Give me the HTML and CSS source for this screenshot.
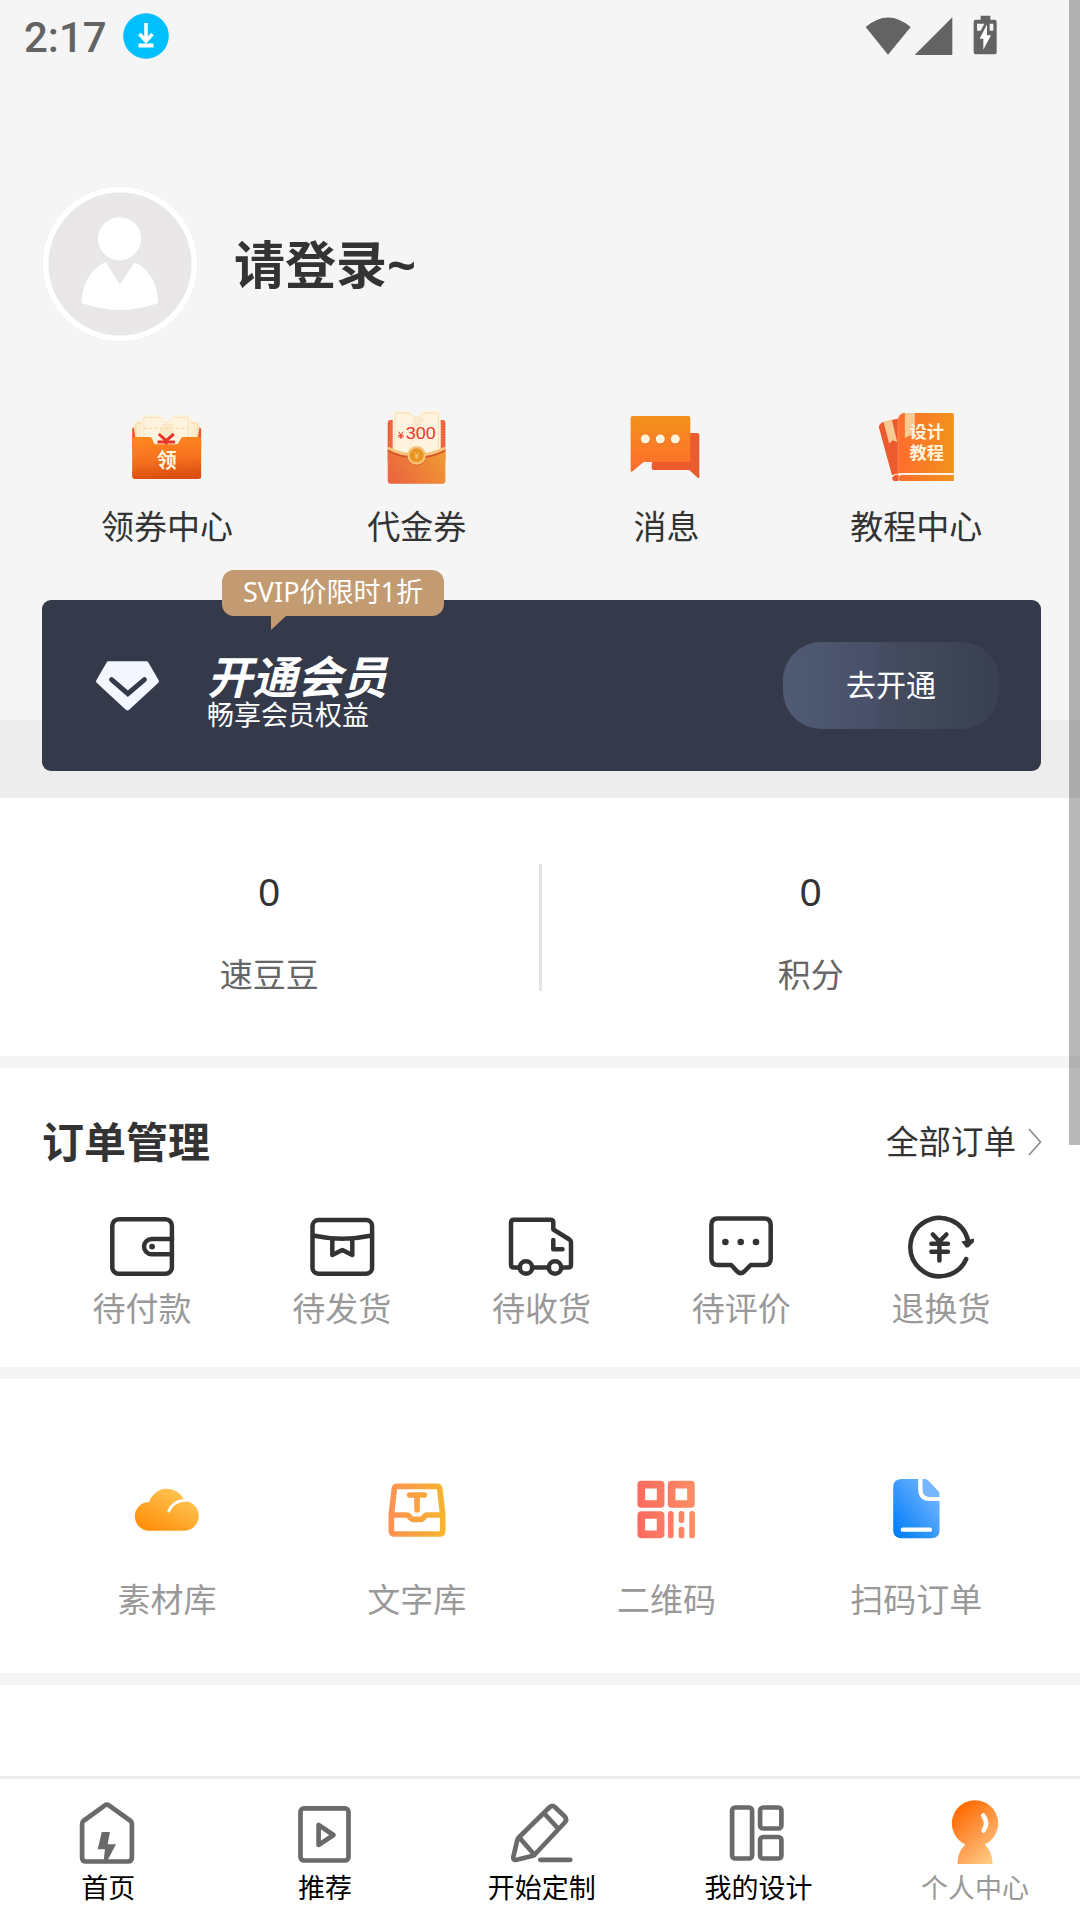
FILE: index.html
```html
<!DOCTYPE html>
<html lang="zh-CN">
<head>
<meta charset="utf-8">
<title>个人中心</title>
<link rel="stylesheet" href="styles.css">
</head>
<body>
<div class="page">
  <header class="hero">
    <div class="status">
      <span class="clock">2:17</span>
      <svg class="download" viewBox="0 0 46 46">
        <circle cx="23" cy="23" r="22.8" fill="#00bfff"/>
        <path d="M23 10v17M16.5 21l6.500 7 6.500-7" fill="none" stroke="#fff" stroke-width="3.600"/>
        <path d="M15.500 32.500h15" stroke="#fff" stroke-width="4"/>
      </svg>
      <svg class="signals" viewBox="190 40 402 126">
        <g fill="#636363">
          <path d="M195 79Q262 22 330 79L262 162Z"/>
          <path d="M455 50V163H342Z"/>
          <path d="M540 45h29v12h13q6 0 6 6v92q0 6-6 6h-57q-6 0-6-6V63q0-6 6-6h15Z"/>
        </g>
        <path d="M529 69h22l-11 21h-11ZM567 69h11v21h-11Z" fill="#f5f5f5"/>
        <path d="M559 71L537 114h11v33L571 104h-12Z" fill="#fff"/>
      </svg>
    </div>

    <div class="profile">
      <svg class="avatar" viewBox="42 186 156 156">
        <circle cx="120" cy="264" r="77.800" fill="#fff" stroke="#e6e6e6" stroke-width=".5"/>
        <circle cx="120" cy="264" r="71.500" fill="#e9e7e8"/>
        <circle cx="119.600" cy="238.800" r="21.600" fill="#fff"/>
        <path d="M106 262L119.800 284.500L134.500 262.500C149 268 158 285 158.300 303Q120 317 81.700 303C82 284 91 268 106 262Z" fill="#fff"/>
      </svg>
      <h1 class="login">请登录~</h1>
    </div>

    <nav class="quick">
      <a class="cell">
        <svg class="pic" viewBox="134.600 45 252 252">
          <defs>
            <linearGradient id="folder" x1="0" y1="0" x2=".15" y2="1"><stop offset="0" stop-color="#ff8a1f"/><stop offset=".6" stop-color="#f5701f"/><stop offset="1" stop-color="#dc4f10"/></linearGradient>
          </defs>
          <path d="M156 118q0-5 5-6h196q5 1 6 6v60H156Z" fill="#ee5a2b"/>
          <path d="M160 104q1-8 9-9l21-4v64h-22ZM359 104q-1-8-9-9l-21-4v64h22Z" fill="#fcecc9"/>
          <path d="M168 145l-2-38q1-6 8-7l14-2M351 145l2-38q-1-6-8-7l-14-2" fill="none" stroke="#f3d49c" stroke-width="2.500"/>
          <path d="M190 76h49q5 0 7 7q13 20 26 0q2-7 7-7h48q6 0 6 6v92H184V82q0-6 6-6Z" fill="#fdf3df"/>
          <path d="M191 160V82h48q9 16 20 16t20-16h46v78" fill="none" stroke="#f7dfb3" stroke-width="2.500"/>
          <path d="M248 102h36l-16 18h16l-48 40 13-29h-14Z" fill="#fae8c7"/>
          <path d="M192 115h134" stroke="#f6d797" stroke-width="3" stroke-dasharray="9 7"/>
          <path d="M236 132l22 20 23-20M232 156h53M258 150v20" stroke="#e8382a" stroke-width="9" fill="none"/>
          <path d="M156 150q0-9 8-9h46q4 0 6 5l5 13q2 4 7 4h60q5 0 7-4l7-13q2-5 6-5h47q8 0 8 9v109q0 8-8 8H164q-8 0-8-8Z" fill="url(#folder)"/>
          <text class="glyph" x="260" y="234" font-size="60" text-anchor="middle" fill="#fff3dc">领</text>
        </svg>
        <span>领券中心</span>
      </a>
      <a class="cell">
        <svg class="pic" viewBox="883.900 45 252 252">
          <defs>
            <linearGradient id="env" x1="0" y1=".6" x2="1" y2=".2"><stop offset="0" stop-color="#eb6740"/><stop offset="1" stop-color="#ef9a30"/></linearGradient>
          </defs>
          <rect x="922" y="90" width="173" height="130" rx="9" fill="#ec5d36"/>
          <path d="M926 98h165M926 106h165M926 114h165M926 122h165M926 130h165M926 138h165M926 146h165M926 154h165M926 162h165M926 170h165" stroke="#f37b51" stroke-width="3"/>
          <path d="M944 63h44q4 1 6 7q14 20 29 0q2-6 6-7h45q7 0 7 7v125H937V70q0-7 7-7Z" fill="#fdf3df"/>
          <path d="M944 192V69h43q9 14 21 14t21-14h45v123" fill="none" stroke="#f7dfb3" stroke-width="3"/>
          <path d="M1000 84h34l-15 30h16l-50 56 14-42h-14Z" fill="#fbead0"/>
          <path d="M922 176Q1008 224 1095 176V272q0 9-9 9H931q-9 0-9-9Z" fill="url(#env)"/>
          <path d="M923 175Q1008 218 1094 175" fill="none" stroke="#d95329" stroke-width="5" transform="translate(0 7)"/>
          <path d="M923 174Q1008 216 1094 174" fill="none" stroke="#f6c27c" stroke-width="8"/>
          <circle cx="1009" cy="199" r="28" fill="#d9662a"/>
          <circle cx="1009" cy="196" r="28" fill="#f6c27c"/>
          <circle cx="1009" cy="196" r="21" fill="#e8951f"/>
          <path d="M1003 187l6 9 6-9M1003 197h12M1003 202h12M1009 196v11" stroke="#f8cc83" stroke-width="2.500" fill="none"/>
          <path d="M954.500 125l7 10 7-10M953 136h17M953 141h17M961.500 135v12" stroke="#e8382a" stroke-width="3" fill="none"/>
          <text class="price" x="976" y="146" font-size="50" textLength="90" lengthAdjust="spacingAndGlyphs" fill="#e8382a">300</text>
        </svg>
        <span>代金券</span>
      </a>
      <a class="cell">
        <svg class="pic" viewBox="133.100 45 252 252">
          <defs>
            <linearGradient id="msg" x1="0" y1="0" x2="0" y2="1"><stop offset="0" stop-color="#f2921c"/><stop offset="1" stop-color="#ff6c2d"/></linearGradient>
          </defs>
          <path d="M222 129h131q6 0 6 6v129h-4l-26-24H222q-6 0-6-6Z" fill="#eb5b2d"/>
          <path d="M159 78h167q6 0 6 6v126q0 6-6 6H192l-33 28q-6 3-6-2V84q0-6 6-6Z" fill="url(#msg)"/>
          <g fill="#d95a1e"><circle cx="198" cy="150" r="13"/><circle cx="243" cy="150" r="13"/><circle cx="288" cy="150" r="13"/></g>
          <g fill="#fff3dc"><circle cx="197" cy="147" r="13.500"/><circle cx="242" cy="147" r="13.500"/><circle cx="287" cy="147" r="13.500"/></g>
        </svg>
        <span>消息</span>
      </a>
      <a class="cell">
        <svg class="pic" viewBox="882.400 45 252 252">
          <defs>
            <linearGradient id="book"><stop offset="0" stop-color="#ff6d2d"/><stop offset="1" stop-color="#f2921c"/></linearGradient>
          </defs>
          <path d="M897 112q1-10 11-15l50-12v168l-22 2Z" fill="#eb5b2d"/>
          <path d="M911 95l25-6 16 67-14-5-10 10Z" fill="#f8c993"/>
          <path d="M972 69h145q5 0 5 5v175H955V88q2-17 17-19Z" fill="url(#book)"/>
          <path d="M955 252V88q2-17 17-19" fill="none" stroke="#ff9a6c" stroke-width="2"/>
          <path d="M975 69h30v73l-15-6-15 9Z" fill="#f8c993"/>
          <path d="M938 262q6-9 18-9v20h-14q-7-3-4-11Z" fill="#eb5b2d"/>
          <path d="M956 264q2-9 10-9h156v18H963q-7-1-7-9Z" fill="url(#book)"/>
          <path d="M936 259q8-7 22-7h164" fill="none" stroke="#fff0df" stroke-width="3"/>
          <g class="glyph" fill="#fff3dc" font-size="52" text-anchor="middle"><text x="1041" y="143">设计</text><text x="1041" y="207">教程</text></g>
        </svg>
        <span>教程中心</span>
      </a>
    </nav>

    <section class="vip">
      <svg class="diamond" viewBox="228 302 190 150">
        <path d="M265 302h115q4 0 6 4l31 54q2 4-1 7l-88 82q-5 4-10 0l-88-82q-3-3-1-7l31-54q2-4 5-4Z" fill="#f4f7ff"/>
        <path d="M275 358L324 400L374 358" fill="none" stroke="#343a4a" stroke-width="15" stroke-linecap="round"/>
      </svg>
      <div class="vip-text">
        <b>开通会员</b>
        <span>畅享会员权益</span>
      </div>
      <a class="vip-btn">去开通</a>
      <div class="badge">SVIP价限时1折</div>
    </section>
  </header>

  <section class="stats">
    <div class="stat"><b>0</b><span>速豆豆</span></div>
    <i class="rule"></i>
    <div class="stat"><b>0</b><span>积分</span></div>
  </section>

  <section class="orders">
    <div class="head">
      <h2>订单管理</h2>
      <a class="all">全部订单<svg class="chevron" viewBox="0 0 14 28"><path d="M1 1L12.500 14L1 27" fill="none" stroke="#8c8c8c" stroke-width="1.700"/></svg></a>
    </div>
    <nav class="steps">
      <a class="step">
        <svg class="line" viewBox="105.900 1211 72 72">
          <rect x="112.200" y="1219.300" width="59.600" height="54.400" rx="6.500"/>
          <path d="M172 1239H151.500a7.600 7.600 0 0 0 0 15.200H172"/>
          <circle class="dot" cx="152" cy="1246.600" r="2.900"/>
        </svg>
        <span>待付款</span>
      </a>
      <a class="step">
        <svg class="line" viewBox="305.700 1211 72 72">
          <rect x="312.200" y="1220" width="59.600" height="53.700" rx="6"/>
          <path d="M312.500 1235.500Q342 1241.800 371.500 1235.500M332 1239.500V1255L342 1250L352 1255V1239.500"/>
        </svg>
        <span>待发货</span>
      </a>
      <a class="step">
        <svg class="line" viewBox="505.500 1211 72 72">
          <path d="M520.500 1267.500H514.500q-3 0-3-3V1223q0-3.200 3-3.200H551q2.800 0 2.800 2.800V1229.500L570 1239.500q1.500 1.200 1.500 3V1264.500q0 3-3 3H562M532.500 1267.500H549.500M553.800 1240V1249.300H563"/>
          <circle cx="526.500" cy="1267.500" r="6.200"/>
          <circle cx="555.500" cy="1267.500" r="6.200"/>
        </svg>
        <span>待收货</span>
      </a>
      <a class="step">
        <svg class="line" viewBox="705.300 1211 72 72">
          <path d="M718 1218.500H764.500q6.500 0 6.500 6.500V1258.500q0 6.500-6.500 6.500H751L744.500 1271.500q-3.500 3.200-7 0L731.500 1265H718q-6.300 0-6.300-6.500V1225q0-6.500 6.300-6.500Z"/>
          <g class="dot"><circle cx="725.700" cy="1242" r="3.300"/><circle cx="741" cy="1242" r="3.300"/><circle cx="756.300" cy="1242" r="3.300"/></g>
        </svg>
        <span>待评价</span>
      </a>
      <a class="step">
        <svg class="line" viewBox="905.100 1211 72 72">
          <path d="M966.300 1259A29.200 29.200 0 1 1 968.200 1241"/>
          <path class="dot" d="M961.500 1241.500l12.500-3v3.500l-5.500 5.500h-2.500Z"/>
          <path d="M933 1234.500L939.500 1241.500L946.500 1234.500M931.500 1243.700H948M931.500 1251.700H948M939.500 1241V1260.500"/>
        </svg>
        <span>退换货</span>
      </a>
    </nav>
  </section>

  <nav class="tools">
    <a class="cell">
      <svg class="pic" viewBox="134.600 54 252 252">
        <defs><linearGradient id="cloud" x1="0" y1=".9" x2=".75" y2="0"><stop offset="0" stop-color="#ff8c05"/><stop offset="1" stop-color="#ffc85a"/></linearGradient></defs>
        <path d="M207 242A43 43 0 0 1 207 156A56 56 0 0 1 313 153A44 44 0 0 1 310 242Z" fill="url(#cloud)"/>
        <path d="M266 183Q279 151 320 151" fill="none" stroke="#fff" stroke-width="8.500" stroke-linecap="round"/>
      </svg>
      <span>素材库</span>
    </a>
    <a class="cell">
      <svg class="pic" viewBox="883.900 54 252 252">
        <defs><linearGradient id="tray" gradientUnits="userSpaceOnUse" x1="924" y1="0" x2="1096" y2="0"><stop offset="0" stop-color="#ff9054"/><stop offset="1" stop-color="#f7b52c"/></linearGradient></defs>
        <path d="M950 109H1071q6 0 7 7L1087 194V242q0 10-10 10H943q-10 0-10-10V194L942 116q1-7 8-7ZM933 195H979q5 0 8 5t9 8h28q5-3 8-8t8-5H1087M988 135H1032M1010 136V179" fill="none" stroke="url(#tray)" stroke-width="17" stroke-linejoin="round" stroke-linecap="round"/>
      </svg>
      <span>文字库</span>
    </a>
    <a class="cell">
      <svg class="pic" viewBox="133.100 54 252 252">
        <defs><linearGradient id="qr" gradientUnits="userSpaceOnUse" x1="174" y1="0" x2="346" y2="0"><stop offset="0" stop-color="#ff6a5e"/><stop offset="1" stop-color="#fb8e66"/></linearGradient></defs>
        <g fill="none" stroke="url(#qr)" stroke-width="23" stroke-linejoin="round">
          <rect x="185" y="104" width="58" height="58"/><rect x="276" y="104" width="58" height="58"/><rect x="185" y="195" width="58" height="58"/>
        </g>
        <g fill="url(#qr)"><rect x="265" y="183" width="17" height="82" rx="8"/><rect x="297" y="183" width="17" height="36" rx="8"/><rect x="297" y="230" width="17" height="35" rx="8"/><rect x="329" y="183" width="17" height="82" rx="8"/></g>
      </svg>
      <span>二维码</span>
    </a>
    <a class="cell">
      <svg class="pic" viewBox="882.400 54 252 252">
        <defs><linearGradient id="doc" x1=".1" y1="1" x2=".9" y2=".2"><stop offset="0" stop-color="#007df9"/><stop offset="1" stop-color="#70b4ff"/></linearGradient></defs>
        <path d="M966 87H1015V118q0 35 35 35H1079V240q0 25-25 25H966q-26 0-26-25V112q0-25 26-25Z" fill="url(#doc)"/>
        <path d="M1028 87h7q5 0 9 4l31 32q4 4 4 9v9H1050q-22 0-22-23Z" fill="#75b6ff"/>
        <path d="M969 239H1050" stroke="#fff" stroke-width="13" stroke-linecap="round"/>
      </svg>
      <span>扫码订单</span>
    </a>
  </nav>

  <footer class="tabs">
    <a class="tab">
      <svg class="tabicon" viewBox="72.300 1799 72 68">
        <path d="M105.200 1805.300q2-1.500 4 0L131 1821q1.200 1 1.200 3V1857.500q0 4-4 4H86.400q-4 0-4-4V1824q0-2 1.200-3Z"/>
        <path class="fill" d="M102 1832H110.200L108 1844.300H116.300L107.500 1861H104L105.200 1849.300H98Z"/>
      </svg>
      <span>首页</span>
    </a>
    <a class="tab">
      <svg class="tabicon" viewBox="289 1799 72 68">
        <rect x="300.500" y="1808.300" width="48" height="52.200" rx="3.500"/>
        <path d="M318.600 1825V1845L333.500 1835Z"/>
      </svg>
      <span>推荐</span>
    </a>
    <a class="tab">
      <svg class="tabicon" viewBox="505.700 1799 72 68">
        <path d="M518 1838L549.500 1807q2.500-2.200 5 0L564.500 1816.500q2.500 3 0 6L533.500 1855.500L515.500 1860q-3 .2-2.500-3L517 1840ZM519 1837.500L534.300 1855M543.500 1813L557.800 1828.500"/>
        <path d="M540 1859.800H570"/>
      </svg>
      <span>开始定制</span>
    </a>
    <a class="tab">
      <svg class="tabicon" viewBox="722.400 1799 72 68">
        <rect x="732.500" y="1807.500" width="20" height="51" rx="3"/>
        <rect x="760.500" y="1807.500" width="21.300" height="21" rx="3"/>
        <rect x="760.500" y="1837" width="21.300" height="21.500" rx="3"/>
      </svg>
      <span>我的设计</span>
    </a>
    <a class="tab active">
      <svg class="me" viewBox="939.100 1799 72 68">
        <defs><linearGradient id="me" x1=".15" y1=".1" x2=".75" y2="1"><stop offset="0" stop-color="#ff6a00"/><stop offset=".55" stop-color="#ff9c4c"/><stop offset="1" stop-color="#ffc982"/></linearGradient></defs>
        <path d="M965.500 1844.500A23.200 23.200 0 1 1 984.800 1844.500Q992.700 1852 992.700 1864H957.500Q957.500 1852 965.500 1844.500Z" fill="url(#me)"/>
        <path d="M983.300 1815.500Q989 1823 983.700 1830.500" fill="none" stroke="#fff" stroke-width="4.600" stroke-linecap="round"/>
      </svg>
      <span>个人中心</span>
    </a>
  </footer>
  <div class="scrollbar"></div>
</div>
</body>
</html>
```

FILE: styles.css
```css
* { box-sizing: border-box; }
body { margin: 0; background: #fff; }
h1, h2 { margin: 0; }
svg { display: block; flex: none; }

.page {
  position: relative;
  display: flex;
  flex-direction: column;
  width: 1080px;
  height: 1920px;
  overflow: hidden;
  color: #333;
  font-family: "Noto Sans", "Noto Sans CJK SC", sans-serif;
  font-size: 33px;
  line-height: 40px;
}

.hero {
  height: 798px;
  padding: 0 39px 0 42px;
  background: linear-gradient(#f5f5f5 720px, #ededed 720px);
}

.status {
  display: flex;
  height: 72px;
  margin: 0 43px 0 -18px;
  padding-top: 13px;
}
.clock {
  width: 99px;
  padding-top: 1px;
  color: #636363;
  font: 500 42px/48px Roboto, sans-serif;
}
.download { width: 46px; height: 46px; }
.signals { width: 134px; height: 42px; margin-top: 1px; margin-left: auto; }

.profile {
  display: flex;
  align-items: center;
  gap: 36px;
  margin-top: 114px;
}
.avatar { width: 156px; height: 156px; }
.login { font-size: 51px; line-height: 70px; font-weight: 700; }

.quick, .tools { display: grid; grid-template-columns: repeat(4, 1fr); }
.quick { margin-top: 63px; }
.cell { display: flex; flex-direction: column; align-items: center; }
.pic { width: 84px; height: 84px; }
.cell span { margin-top: 18px; }
.glyph { font-family: "Noto Sans CJK SC", sans-serif; font-weight: 700; }
.price { font-family: "Liberation Sans", sans-serif; }

.vip {
  position: relative;
  display: flex;
  align-items: center;
  height: 171px;
  margin-top: 53px;
  padding: 0 42px 0 54px;
  border-radius: 9px;
  background: #343a4a;
  color: #fff;
}
.diamond { width: 63px; height: 50px; }
.vip-text { display: flex; flex-direction: column; margin: 13px 0 0 48px; }
.vip-text b { font-size: 45px; line-height: 45px; font-style: italic; }
.vip-text span { font-size: 27px; line-height: 32px; }
.vip-btn {
  width: 216px;
  height: 87px;
  margin-left: auto;
  border-radius: 38px;
  background: linear-gradient(90deg, #505a73, #485069 43%, #454c60 46%, #394150);
  font-size: 30px;
  line-height: 85px;
  text-align: center;
}
.badge {
  position: absolute;
  top: -30px;
  left: 180px;
  width: 222px;
  height: 46px;
  border-radius: 12px;
  background: #c29b73;
  font-size: 27px;
  line-height: 44px;
  text-align: center;
}
.badge::after {
  content: "";
  position: absolute;
  top: 46px;
  left: 49px;
  border-top: 14px solid #c29b73;
  border-right: 15px solid transparent;
}

.stats { display: flex; height: 258px; padding-top: 66px; }
.stat {
  flex: 1;
  display: flex;
  flex-direction: column;
  align-items: center;
}
.stat b { margin-top: 2px; font-size: 39px; line-height: 50px; font-weight: 400; }
.stat span { margin-top: 39px; color: #666; }
.rule { width: 3px; height: 127px; background: #e4e4e4; }

.orders {
  height: 323px;
  padding: 0 38px 0 42px;
  border-top: 12px solid #f5f5f5;
  border-bottom: 12px solid #f5f5f5;
}
.head { display: flex; justify-content: space-between; align-items: center; height: 143px; padding-top: 4px; }
.head h2 { font-size: 42px; line-height: 60px; }
.all { display: flex; align-items: center; gap: 12px; font-size: 32.500px; }
.chevron { width: 14px; height: 28px; }
.steps { display: grid; grid-template-columns: repeat(5, 199.8px); }
.step { display: flex; flex-direction: column; align-items: center; color: #999; }
.step span { margin-top: 6px; }
.line { width: 72px; height: 72px; fill: none; stroke: #333; stroke-width: 4.500px; stroke-linecap: round; stroke-linejoin: round; }
.dot { fill: #333; stroke: none; }

.tools { height: 306px; padding: 89px 39px 0 42px; border-bottom: 12px solid #f5f5f5; color: #999; }
.tools .cell span { margin-top: 28px; }

.tabs {
  display: grid;
  grid-template-columns: repeat(5, 216.7px);
  height: 144px;
  margin-top: auto;
  padding-top: 20px;
  border-top: 3px solid #ececec;
  color: #000;
  font-size: 27px;
}
.tab { display: flex; flex-direction: column; align-items: center; }
.tab span { margin-top: 1px; }
.tabicon, .me { width: 72px; height: 68px; }
.tabicon { fill: none; stroke: #6a6a6a; stroke-width: 4.700px; stroke-linejoin: round; stroke-linecap: round; }
.tabicon .fill { fill: #6a6a6a; stroke: none; }
.active { color: #999; }

.scrollbar {
  position: absolute;
  top: 0;
  right: 0;
  width: 11px;
  height: 1145px;
  background: rgba(0, 0, 0, .28);
}
```
